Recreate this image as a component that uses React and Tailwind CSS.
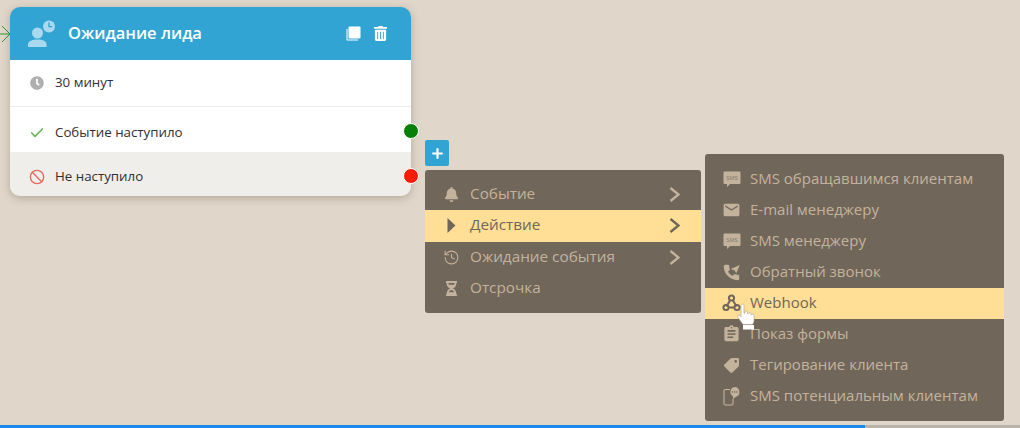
import { Ban, Check, History, Plus } from "lucide-react";
import { FaBell, FaClock, FaHourglassHalf, FaTag, FaTrashAlt } from "react-icons/fa";
import { MdAssignment, MdEmail } from "react-icons/md";

const font = { fontFamily: '"Open Sans", "Noto Sans", sans-serif' };

function SmsIcon() {
  return (
    <svg width="18" height="17" viewBox="0 0 18 17">
      <path d="M1.500 0.500h15a1 1 0 0 1 1 1v10.500a1 1 0 0 1-1 1H7l-3 3v-3H1.500a1 1 0 0 1-1-1V1.500a1 1 0 0 1 1-1z" fill="currentColor" />
      <text x="9" y="9" textAnchor="middle" fontSize="5.500" fill="#857a6c" fontFamily="Liberation Sans, sans-serif">SMS</text>
    </svg>
  );
}

function PhoneArrowIcon() {
  return (
    <svg width="19" height="19" viewBox="0 0 24 24" fill="currentColor">
      <path d="M6.620 10.790c1.440 2.830 3.760 5.140 6.590 6.590l2.200-2.200c.27-.27.67-.36 1.020-.24 1.120.37 2.330.57 3.570.57.55 0 1 .45 1 1V20c0 .55-.45 1-1 1-9.390 0-17-7.610-17-17 0-.55.45-1 1-1h3.500c.55 0 1 .45 1 1 0 1.250.2 2.450.57 3.570.11.350.03.74-.25 1.020l-2.200 2.200z" stroke="currentColor" strokeWidth="1.500" />
      <path d="M11 7.500L22.500 2.500L18 13L16 9.500z" />
    </svg>
  );
}

function WebhookIcon() {
  return (
    <svg width="19" height="18" viewBox="0 0 19 18" fill="none" stroke="currentColor" strokeWidth="2">
      <path d="M8 6.500L4.500 12.500M7 13.500h5.500M11 6.500l3.500 6" />
      <circle cx="9.500" cy="4" r="2.600" />
      <circle cx="4" cy="13.500" r="2.600" />
      <circle cx="15" cy="13.500" r="2.600" />
    </svg>
  );
}

function PhoneChatIcon() {
  return (
    <svg width="18" height="20" viewBox="0 0 18 20" fill="none">
      <path d="M7 3.500H2.500A1.500 1.500 0 0 0 1 5v12.500A1.500 1.500 0 0 0 2.500 19h6a1.500 1.500 0 0 0 1.500-1.500V13" stroke="currentColor" strokeWidth="1.100" />
      <path d="M11.500 1a5 5 0 0 1 1.600 9.700L10 13v-2.700A5 5 0 0 1 11.500 1z" fill="currentColor" />
      <circle cx="9.500" cy="6" r="0.800" fill="#70665a" />
      <circle cx="11.700" cy="6" r="0.800" fill="#70665a" />
      <circle cx="13.900" cy="6" r="0.800" fill="#70665a" />
    </svg>
  );
}

function PlayIcon() {
  return (
    <svg width="9" height="15" viewBox="0 0 9 15" fill="currentColor">
      <path d="M0.500 0L8.500 7.500L0.500 15z" />
    </svg>
  );
}

function Chevron() {
  return (
    <svg width="11" height="15" viewBox="0 0 11 15" fill="none" stroke="currentColor" strokeWidth="2.300">
      <path d="M1.500 1l8 6.500-8 6.500" />
    </svg>
  );
}

function CopyIcon() {
  return (
    <svg width="15" height="15" viewBox="0 0 15 15" fill="#fff">
      <path d="M3.500 0.500h10a1 1 0 0 1 1 1v10a1 1 0 0 1-1 1h-10a1 1 0 0 1-1-1v-10a1 1 0 0 1 1-1z" />
      <path d="M1.500 3v10.500H12v1H1.200A.7.7 0 0 1 .5 13.800V3z" />
    </svg>
  );
}

function LeadWaitIcon() {
  return (
    <svg width="30" height="30" viewBox="0 0 30 30">
      <circle cx="10.500" cy="14" r="5.500" fill="#a9d9ee" />
      <path d="M1 28v-2.500C1 22 5 20.500 10.500 20.500S19.500 22 19.500 25.500V28z" fill="#a9d9ee" />
      <circle cx="22" cy="7.500" r="6" fill="#a9d9ee" />
      <path d="M22 3.500v4.200h3.200" stroke="#32a4d3" strokeWidth="1.300" fill="none" />
    </svg>
  );
}

function HandCursor() {
  return (
    <svg width="20" height="27" viewBox="0 0 20 27" className="absolute left-[736px] top-[303px]">
      <path d="M5 2.500c0-2 3-2 3 0V10l1 .2V9c0-1.500 2.500-1.500 2.500 0v1.500l1 .2c0-1.500 2.500-1.500 2.500 0v1l.8.2c.3-1.300 2.200-1 2.200.5v5.600c0 1.500-1 2.500-1.500 3.500H7l-5-7c-1.200-1.800.8-3.300 2-2l1 1.300z" fill="#fff" stroke="#a89e8e" strokeWidth="0.600" />
      <rect x="7" y="22" width="11" height="4.500" fill="#fff" />
    </svg>
  );
}

const firstMenu = [
  { label: "Событие", icon: <FaBell size={15} />, arrow: true },
  { label: "Действие", icon: <PlayIcon />, arrow: true, active: true },
  { label: "Ожидание события", icon: <History size={17} strokeWidth={1.500} />, arrow: true },
  { label: "Отсрочка", icon: <FaHourglassHalf size={15} /> },
];

const secondMenu = [
  { label: "SMS обращавшимся клиентам", icon: <SmsIcon /> },
  { label: "E-mail менеджеру", icon: <MdEmail size={22} /> },
  { label: "SMS менеджеру", icon: <SmsIcon /> },
  { label: "Обратный звонок", icon: <PhoneArrowIcon /> },
  { label: "Webhook", icon: <WebhookIcon />, active: true },
  { label: "Показ формы", icon: <MdAssignment size={20} /> },
  { label: "Тегирование клиента", icon: <FaTag size={15} className="-scale-x-100" /> },
  { label: "SMS потенциальным клиентам", icon: <PhoneChatIcon /> },
];

function MenuRow({ item, rowClass }) {
  return (
    <div className={`flex items-center pl-[17px] pr-[21px] ${rowClass} ${item.active ? "bg-[#fedf95] text-[#70665a]" : "text-[#c4b39c]"}`}>
      <span className="flex w-[28px] shrink-0 items-center justify-center pr-[9px]">{item.icon}</span>
      <span className="flex-1 whitespace-nowrap pb-[2px]">{item.label}</span>
      {item.arrow && <Chevron />}
    </div>
  );
}

function CardRow({ icon, className = "", children }) {
  return (
    <div className={`flex items-center pl-[19px] text-[13.300px] text-[#2f2f33] ${className}`}>
      <span className="flex w-[16px] shrink-0 items-center justify-center">{icon}</span>
      <span className="ml-[10px]">{children}</span>
    </div>
  );
}

export default function App() {
  return (
    <div className="relative h-[428px] w-[1020px] overflow-hidden bg-[#e0d7ca]" style={font}>
      {/* входящая стрелка */}
      <svg width="11" height="18" viewBox="0 0 11 18" fill="none" stroke="#2f9a3a" strokeWidth="1" className="absolute left-0 top-[25px]">
        <path d="M0 9h10M2 1l8 8-8 8" />
      </svg>

      {/* карточка */}
      <div className="absolute left-[10px] top-[7px] w-[401px] rounded-[10px] shadow-[0_2px_8px_rgba(90,80,60,0.35)]">
        <div className="flex h-[53px] items-center rounded-t-[10px] bg-[#32a4d3] pl-[17px] pr-[23px] text-white">
          <LeadWaitIcon />
          <span className="ml-[11px] flex-1 pb-[1px] text-[16.500px] font-semibold">Ожидание лида</span>
          <CopyIcon />
          <FaTrashAlt size={15} className="ml-[12px]" />
        </div>
        <CardRow icon={<FaClock size={14} className="text-[#b0afb0]" />} className="h-[47px] border-b border-[#ececea] bg-white">
          30 минут
        </CardRow>
        <CardRow icon={<Check size={16} strokeWidth={2.500} className="text-[#6cb35a]" />} className="h-[45px] bg-white pt-[6px]">
          Событие наступило
        </CardRow>
        <CardRow icon={<Ban size={16} strokeWidth={2} className="text-[#e4685a]" />} className="h-[44px] rounded-b-[10px] bg-[#f0eeeb] pt-[5px]">
          Не наступило
        </CardRow>
        <span className="absolute left-[393px] top-[116px] h-[16px] w-[16px] rounded-full border-[1.500px] border-white bg-[#088008]" />
        <span className="absolute left-[393px] top-[161px] h-[16px] w-[16px] rounded-full border-[1.500px] border-white bg-[#fb1c08]" />
      </div>

      {/* кнопка добавления */}
      <div className="absolute left-[425px] top-[140px] flex h-[26px] w-[24px] items-center justify-center rounded-[2px] bg-[#32a4d3] text-white">
        <Plus size={15} strokeWidth={3.500} />
      </div>

      {/* первое меню */}
      <div className="absolute left-[425px] top-[170px] w-[276px] rounded-[3px] bg-[#70665a] py-[9px]">
        {firstMenu.map((item) => (
          <MenuRow key={item.label} item={item} rowClass="h-[31.250px] text-[15.300px]" />
        ))}
      </div>

      {/* второе меню */}
      <div className="absolute left-[705px] top-[154px] w-[299px] rounded-[3px] bg-[#70665a] py-[9.500px]">
        {secondMenu.map((item) => (
          <MenuRow key={item.label} item={item} rowClass="h-[31px] text-[15px]" />
        ))}
      </div>

      <HandCursor />

      {/* полоса снизу */}
      <div className="absolute bottom-0 left-0 flex h-[3px] w-full">
        <div className="w-[865px] bg-[#1b8ae6]" />
        <div className="flex-1 bg-[#b9b2a8]" />
      </div>
    </div>
  );
}
